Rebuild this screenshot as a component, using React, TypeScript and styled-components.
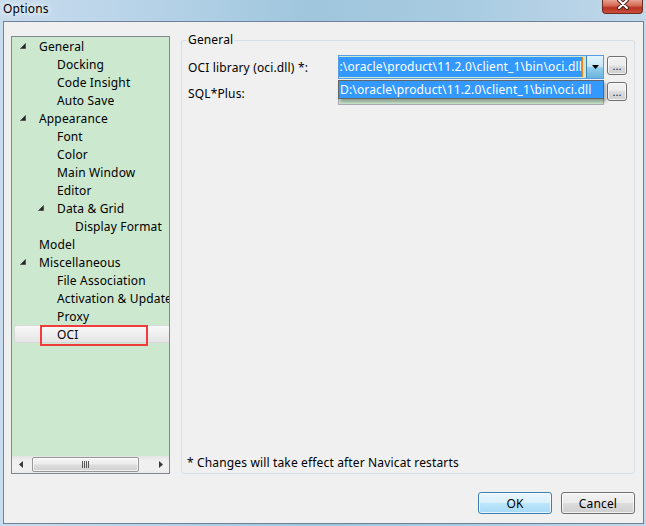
import styled, { createGlobalStyle } from 'styled-components'

const uiFont = `"Noto Sans", "Open Sans", "Liberation Sans", sans-serif`
const windowGreen = '#cce8cf'

const GlobalStyle = createGlobalStyle`
  html, body {
    margin: 0;
    padding: 0;
  }
  body {
    width: 646px;
    height: 526px;
    overflow: hidden;
    font-family: ${uiFont};
    font-size: 12px;
    letter-spacing: 0.15px;
    color: #000;
  }
  *, *::before, *::after {
    box-sizing: border-box;
  }
`

const Window = styled.div`
  width: 646px;
  height: 526px;
  display: flex;
  flex-direction: column;
  background: linear-gradient(90deg, #c9dcee 0%, #b7d3e8 22%, #9fc6dd 48%, #a8cbe1 72%, #c2d8ea 100%);
`

const TitleBar = styled.div`
  height: 21px;
  flex: none;
  display: flex;
  justify-content: space-between;
  align-items: flex-start;
  padding-left: 3px;
`

const Title = styled.div`
  font-size: 12px;
  line-height: 17px;
  text-shadow: 0 0 6px #fff, 0 0 10px rgba(255, 255, 255, 0.8);
`

const CloseButton = styled.div`
  width: 41px;
  height: 14px;
  margin-right: 3px;
  border: 1px solid #6d2a22;
  border-top: none;
  border-radius: 0 0 4px 4px;
  background: linear-gradient(#e7a291, #d26752 45%, #b9321f 60%, #c9503c);
  display: flex;
  align-items: center;
  justify-content: center;

  svg {
    margin-top: -5px;
  }
`

const Client = styled.div`
  flex: 1;
  margin: 0 2px 2px 3px;
  border: 1px solid #6e8197;
  background: #f0f0f0;
  display: flex;
  flex-direction: column;
  padding: 14px 8px 9px 7px;
`

const Main = styled.div`
  height: 438px;
  flex: none;
  display: flex;
  gap: 11px;
`

/* ---- tree ---- */

const TreePanel = styled.div`
  width: 159px;
  flex: none;
  border: 1px solid #828790;
  background: ${windowGreen};
  display: flex;
  flex-direction: column;
`

const TreeList = styled.div`
  flex: 1;
  overflow: hidden;
`

const TreeRow = styled.div<{ $level: number; $selected?: boolean }>`
  position: relative;
  height: 18px;
  display: flex;
  align-items: center;
  white-space: nowrap;
  padding-left: ${({ $level, $selected }) => 8 + 18 * $level - ($selected ? 3 : 0)}px;
  ${({ $selected }) =>
    $selected &&
    `
    margin: 0 -6px 0 2px;
    border: 1px solid #d9d9d9;
    border-radius: 3px;
    background: linear-gradient(#f8f8f8, #e5e5e5);
  `}
`

const Expander = styled.span`
  width: 19px;
  flex: none;
  display: flex;
  align-items: center;
`

const Annotation = styled.div`
  position: absolute;
  left: 25px;
  top: -1px;
  width: 108px;
  height: 21px;
  border: 2px solid #f23b3b;
  pointer-events: none;
`

const HScroll = styled.div`
  height: 17px;
  flex: none;
  display: flex;
  background: linear-gradient(#e4e4e4, #f0f0f0 30%, #f0f0f0 80%, #e8e8e8);
`

const ScrollArrow = styled.div`
  width: 17px;
  flex: none;
  display: flex;
  align-items: center;
  justify-content: center;
`

const ScrollTrack = styled.div`
  flex: 1;
  display: flex;
  padding: 1px 0;
`

const ScrollThumb = styled.div`
  width: 107px;
  margin-left: 3px;
  border: 1px solid #979797;
  border-radius: 2px;
  background: linear-gradient(#f5f5f5, #ececec 45%, #dcdcdc 55%, #d0d0d0);
  box-shadow: inset 0 0 0 1px rgba(255, 255, 255, 0.7);
  display: flex;
  align-items: center;
  justify-content: center;
`

/* ---- group box ---- */

const GroupBox = styled.fieldset`
  flex: 1;
  min-width: 0;
  margin: -4px 0 0;
  padding: 7px 7px 2px 6px;
  border: 1px solid #d5dfe5;
  border-radius: 3px;
  display: flex;
  flex-direction: column;
`

const GroupLegend = styled.legend`
  margin-left: -1px;
  padding: 0 1px;
  line-height: 16px;
`

const Fields = styled.div`
  display: flex;
  flex-direction: column;
  gap: 2px;
`

const FieldRow = styled.div`
  display: grid;
  grid-template-columns: 147px 266px 20px;
  column-gap: 3px;
  height: 24px;
`

const FieldLabel = styled.div`
  line-height: 16px;
  padding-top: 5px;
`

const Combo = styled.div`
  position: relative;
  z-index: 2;
  display: flex;
  border: 1px solid #569de5;
  background: ${windowGreen};
`

const EditArea = styled.div`
  flex: 1;
  min-width: 0;
  overflow: hidden;
  display: flex;
  justify-content: flex-end;
  padding: 1px 3px 1px 1px;
`

const Selection = styled.span`
  white-space: nowrap;
  line-height: 20px;
  background: #3399ff;
  color: #fff;
  border-right: 1px solid #e8871e;
`

const DropButton = styled.div`
  width: 17px;
  flex: none;
  border-left: 1px solid #3c7fb1;
  background: linear-gradient(#e5f4fc, #c4e5f6 50%, #98d1ef 50%, #68b3db);
  display: flex;
  align-items: center;
  justify-content: center;
`

const DropList = styled.div`
  position: absolute;
  top: calc(100% + 2px);
  left: -1px;
  right: -1px;
  height: 19px;
  border: 1px solid #646464;
  background: #3399ff;
  color: #fff;
  white-space: nowrap;
  line-height: 17px;
  padding-left: 1px;
  box-shadow: 2px 3px 3px rgba(0, 0, 0, 0.3);
`

const EditField = styled.div`
  border: 1px solid #abadb3;
  background: ${windowGreen};
`

const BrowseButton = styled.button`
  width: 20px;
  height: 19px;
  margin-top: 1px;
  padding: 0;
  font-family: ${uiFont};
  font-size: 11px;
  line-height: 1;
  color: #1a1a40;
  border: 1px solid #707070;
  border-radius: 3px;
  background: linear-gradient(#f2f2f2, #ebebeb 50%, #dddddd 50%, #cfcfcf);
  box-shadow: inset 0 0 0 1px rgba(255, 255, 255, 0.7);
`

const Note = styled.div`
  margin-top: auto;
  margin-left: -1px;
  line-height: 16px;
`

/* ---- footer ---- */

const Footer = styled.div`
  margin-top: 18px;
  display: flex;
  justify-content: flex-end;
  gap: 9px;
`

const DialogButton = styled.button<{ $default?: boolean }>`
  width: 74px;
  height: 22px;
  padding: 0;
  font-family: ${uiFont};
  font-size: 12px;
  letter-spacing: 0.15px;
  color: #000;
  border: 1px solid ${({ $default }) => ($default ? '#3c7fb1' : '#707070')};
  border-radius: 3px;
  background: ${({ $default }) =>
    $default
      ? 'linear-gradient(#eaf6fd, #d9f0fc 50%, #bee6fd 50%, #a7d9f5)'
      : 'linear-gradient(#f2f2f2, #ebebeb 50%, #dddddd 50%, #cfcfcf)'};
  box-shadow: inset 0 0 0 1px rgba(255, 255, 255, 0.7);
`

type TreeItem = { label: string; level: number; expanded?: boolean; selected?: boolean }

const treeItems: TreeItem[] = [
  { label: 'General', level: 0, expanded: true },
  { label: 'Docking', level: 1 },
  { label: 'Code Insight', level: 1 },
  { label: 'Auto Save', level: 1 },
  { label: 'Appearance', level: 0, expanded: true },
  { label: 'Font', level: 1 },
  { label: 'Color', level: 1 },
  { label: 'Main Window', level: 1 },
  { label: 'Editor', level: 1 },
  { label: 'Data & Grid', level: 1, expanded: true },
  { label: 'Display Format', level: 2 },
  { label: 'Model', level: 0 },
  { label: 'Miscellaneous', level: 0, expanded: true },
  { label: 'File Association', level: 1 },
  { label: 'Activation & Update', level: 1 },
  { label: 'Proxy', level: 1 },
  { label: 'OCI', level: 1, selected: true },
]

const ociPath = 'D:\\oracle\\product\\11.2.0\\client_1\\bin\\oci.dll'

function ExpandedGlyph() {
  return (
    <svg width="6" height="6" viewBox="0 0 6 6">
      <polygon points="5.5,0.5 5.5,5.5 0.5,5.5" fill="#262626" stroke="#555" strokeWidth="1" />
    </svg>
  )
}

export default function App() {
  return (
    <>
      <GlobalStyle />
      <Window>
        <TitleBar>
          <Title>Options</Title>
          <CloseButton>
            <svg width="14" height="11" viewBox="0 0 14 11">
              <path d="M3 1 L11 9 M11 1 L3 9" stroke="#4a1d16" strokeWidth="4" strokeLinecap="round" />
              <path d="M3 1 L11 9 M11 1 L3 9" stroke="#fff" strokeWidth="2" strokeLinecap="round" />
            </svg>
          </CloseButton>
        </TitleBar>
        <Client>
          <Main>
            <TreePanel>
              <TreeList>
                {treeItems.map((item) => (
                  <TreeRow key={item.label} $level={item.level} $selected={item.selected}>
                    <Expander>{item.expanded && <ExpandedGlyph />}</Expander>
                    {item.label}
                    {item.selected && <Annotation />}
                  </TreeRow>
                ))}
              </TreeList>
              <HScroll>
                <ScrollArrow>
                  <svg width="4" height="7" viewBox="0 0 4 7">
                    <polygon points="4,0 4,7 0,3.5" fill="#3a3a3a" />
                  </svg>
                </ScrollArrow>
                <ScrollTrack>
                  <ScrollThumb>
                    <svg width="8" height="7" viewBox="0 0 8 7">
                      <path d="M0.5 0 V7 M2.5 0 V7 M4.5 0 V7 M6.5 0 V7" stroke="#555" strokeWidth="1" />
                    </svg>
                  </ScrollThumb>
                </ScrollTrack>
                <ScrollArrow>
                  <svg width="4" height="7" viewBox="0 0 4 7">
                    <polygon points="0,0 0,7 4,3.5" fill="#3a3a3a" />
                  </svg>
                </ScrollArrow>
              </HScroll>
            </TreePanel>

            <GroupBox>
              <GroupLegend>General</GroupLegend>
              <Fields>
                <FieldRow>
                  <FieldLabel>OCI library (oci.dll) *:</FieldLabel>
                  <Combo>
                    <EditArea>
                      <Selection>{ociPath}</Selection>
                    </EditArea>
                    <DropButton>
                      <svg width="7" height="4" viewBox="0 0 7 4">
                        <polygon points="0,0 7,0 3.5,4" fill="#000" />
                      </svg>
                    </DropButton>
                    <DropList>{ociPath}</DropList>
                  </Combo>
                  <BrowseButton>...</BrowseButton>
                </FieldRow>
                <FieldRow>
                  <FieldLabel>SQL*Plus:</FieldLabel>
                  <EditField />
                  <BrowseButton>...</BrowseButton>
                </FieldRow>
              </Fields>
              <Note>* Changes will take effect after Navicat restarts</Note>
            </GroupBox>
          </Main>
          <Footer>
            <DialogButton $default>OK</DialogButton>
            <DialogButton>Cancel</DialogButton>
          </Footer>
        </Client>
      </Window>
    </>
  )
}
